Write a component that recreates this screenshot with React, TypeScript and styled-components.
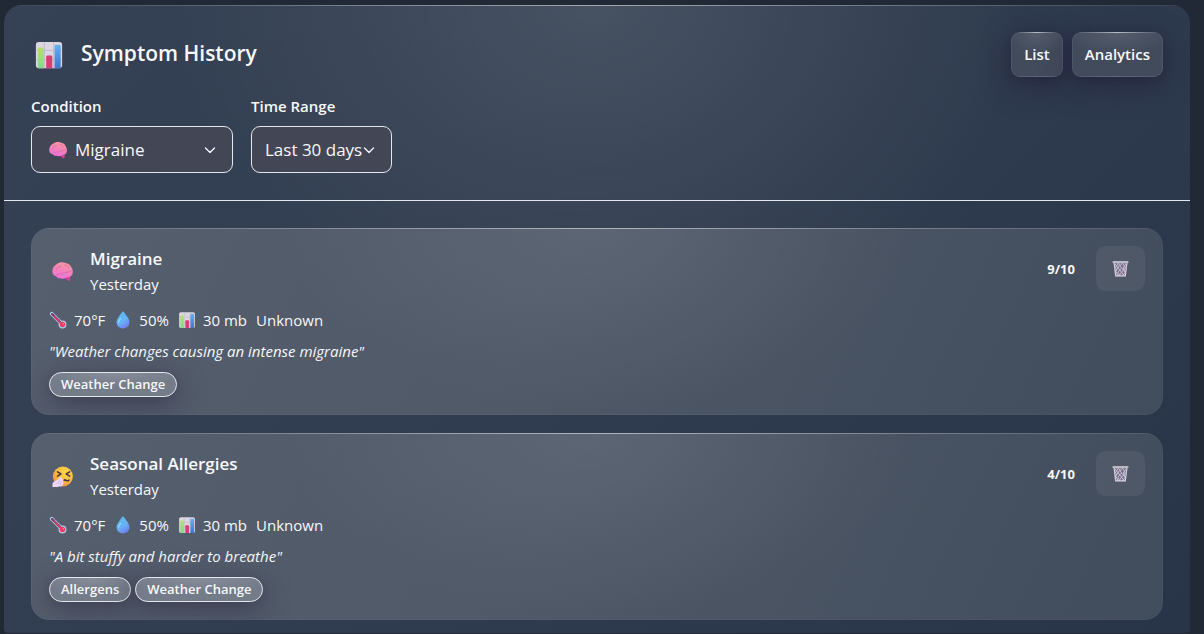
import React from "react";
import styled, { createGlobalStyle } from "styled-components";

const GlobalStyle = createGlobalStyle`
  * { box-sizing: border-box; }
  body {
    margin: 0;
    background: #222936;
    color: #f7f8fa;
    font-family: "Open Sans", "Noto Sans", sans-serif;
    font-size: 15px;
    line-height: 24px;
  }
  button, select { font-family: inherit; color: inherit; margin: 0; }
  h1, h2, p, ul { margin: 0; padding: 0; }
`;

const Page = styled.div`
  padding: 5px 14px 1px 4px;
`;

const Panel = styled.main`
  position: relative;
  border-radius: 18px 18px 4px 4px;
  overflow: hidden;
  background:
    radial-gradient(ellipse 36% 56% at 50% 0, rgba(255, 255, 255, 0.1), rgba(255, 255, 255, 0) 100%),
    linear-gradient(135deg, #354154 0%, #303c4f 50%, #283548 100%);
`;

const Shine = styled.span<{ $strength: number }>`
  position: absolute;
  top: 0;
  left: 0;
  right: 0;
  height: 1px;
  background: linear-gradient(
    90deg,
    rgba(255, 255, 255, 0.04),
    rgba(255, 255, 255, ${(p) => p.$strength}) 50%,
    rgba(255, 255, 255, 0.04)
  );
`;

const Header = styled.header`
  padding: 27px;
  border-bottom: 1px solid #e4e7ec;
`;

const TitleRow = styled.div`
  display: flex;
  align-items: center;
  justify-content: space-between;
`;

const TitleGroup = styled.div`
  display: flex;
  align-items: center;
  gap: 17px;
  padding-left: 3px;
`;

const Title = styled.h1`
  padding-bottom: 3px;
  font-size: 21px;
  line-height: 30px;
  font-weight: 600;
`;

const Actions = styled.div`
  display: flex;
  gap: 9px;
`;

const ActionButton = styled.button`
  position: relative;
  height: 45px;
  padding: 0 12px 2px;
  border: 1px solid rgba(255, 255, 255, 0.07);
  border-radius: 9px;
  overflow: visible;
  background:
    radial-gradient(ellipse 60% 50% at 50% 0, rgba(255, 255, 255, 0.1), rgba(255, 255, 255, 0)),
    #424b5c;
  box-shadow: 0 8px 32px rgba(31, 20, 48, 0.42), 0 2px 8px rgba(31, 20, 48, 0.2);
  font-size: 15px;
  font-weight: 600;
`;

const ButtonShine = styled(Shine)`
  top: -1px;
  left: 6px;
  right: 6px;
`;

const Filters = styled.div`
  display: flex;
  gap: 18px;
  margin-top: 17px;
`;

const Field = styled.div<{ $width: number }>`
  display: flex;
  flex-direction: column;
  gap: 8px;
  width: ${(p) => p.$width}px;
`;

const FieldLabel = styled.label`
  font-weight: 600;
  font-size: 15px;
  line-height: 24px;
`;

const SelectBox = styled.div`
  position: relative;
  display: flex;
  align-items: center;
`;

const Select = styled.select<{ $inset: number }>`
  appearance: none;
  width: 100%;
  height: 47px;
  padding: 0 13px 1px ${(p) => p.$inset}px;
  border: 1px solid #e4e7ec;
  border-radius: 9px;
  background: #434755;
  font-size: 17px;
`;

const SelectIcon = styled.span<{ $end?: boolean }>`
  position: absolute;
  ${(p) => (p.$end ? "right: 17px;" : "left: 17px;")}
  display: flex;
  pointer-events: none;
`;

const List = styled.ul`
  list-style: none;
  display: flex;
  flex-direction: column;
  gap: 18px;
  padding: 27px 27px 13px;
`;

const Card = styled.li`
  position: relative;
  overflow: hidden;
  padding: 18px;
  border-radius: 18px;
  box-shadow: inset 0 0 0 1px rgba(255, 255, 255, 0.03);
  background:
    radial-gradient(ellipse 28% 100% at 50% 0, rgba(255, 255, 255, 0.08), rgba(255, 255, 255, 0)),
    linear-gradient(115deg, #565f6e 0%, #4f5968 45%, #414c5c 100%);
`;

const CardTop = styled.div`
  display: flex;
  align-items: flex-start;
  justify-content: space-between;
`;

const Identity = styled.div`
  display: flex;
  align-items: center;
  gap: 16px;
  padding-left: 2px;
`;

const Condition = styled.h2`
  font-size: 17px;
  line-height: 26px;
  font-weight: 600;
`;

const Muted = styled.p`
  font-size: 15px;
  line-height: 24px;
`;

const CardSide = styled.div`
  display: flex;
  align-items: center;
  gap: 21px;
`;

const Score = styled.span`
  font-size: 13px;
  font-weight: 700;
`;

const DeleteButton = styled.button`
  display: flex;
  align-items: center;
  justify-content: center;
  width: 49px;
  height: 45px;
  padding: 0;
  border: 0;
  border-radius: 9px;
  background: rgba(255, 255, 255, 0.06);
`;

const Weather = styled.div`
  display: flex;
  gap: 9px;
  margin-top: 12px;
  line-height: 24px;
`;

const Reading = styled.span`
  display: flex;
  align-items: center;
  gap: 7px;
`;

const Note = styled.p`
  margin-top: 7px;
  font-style: italic;
  line-height: 24px;
`;

const Tags = styled.div`
  display: flex;
  gap: 4px;
  margin-top: 9px;
`;

const Tag = styled.span`
  height: 25px;
  padding: 0 11px;
  border: 1px solid #e4e7ec;
  border-radius: 13px;
  background:
    radial-gradient(ellipse 60% 60% at 50% 0, rgba(255, 255, 255, 0.14), rgba(255, 255, 255, 0)),
    #747b89;
  box-shadow: 0 8px 32px rgba(31, 20, 48, 0.4), 0 2px 8px rgba(31, 20, 48, 0.15);
  font-size: 13px;
  line-height: 23px;
  font-weight: 600;
`;

type IconProps = { size: number };

const ChartIcon = ({ size }: IconProps) => (
  <svg width={size} height={size} viewBox="0 0 32 32" aria-hidden="true">
    <defs>
      <linearGradient id="chartGreen" x1="0" y1="0" x2="0" y2="1">
        <stop offset="0" stopColor="#b8e069" />
        <stop offset="1" stopColor="#7fdc8e" />
      </linearGradient>
      <linearGradient id="chartBlue" x1="0" y1="0" x2="0" y2="1">
        <stop offset="0" stopColor="#5fb2f6" />
        <stop offset="1" stopColor="#3f76cf" />
      </linearGradient>
    </defs>
    <rect x="2" y="2" width="28" height="28" rx="3" fill="#dcd5e3" />
    <path d="M11 2v28M21 2v28M2 11h28M2 21h28" stroke="#bfb6c8" strokeWidth="1" />
    <path d="M4 9.500a1.500 1.500 0 0 1 1.500-1.500h3.500a1.500 1.500 0 0 1 1.500 1.500V30H5a1 1 0 0 1-1-1z" fill="url(#chartGreen)" />
    <path d="M13 18a1.500 1.500 0 0 1 1.500-1.500H18a1.500 1.500 0 0 1 1.500 1.500v12H13z" fill="#d73c72" />
    <path d="M22 6.500A1.500 1.500 0 0 1 23.500 5H27a1.500 1.500 0 0 1 1.500 1.500V29a1 1 0 0 1-1 1H22z" fill="url(#chartBlue)" />
  </svg>
);

const BrainIcon = ({ size }: IconProps) => (
  <svg width={size} height={size} viewBox="0 0 32 32" aria-hidden="true">
    <defs>
      <linearGradient id="brainPink" x1="0.65" y1="0" x2="0.35" y2="1">
        <stop offset="0" stopColor="#f5989f" />
        <stop offset="0.5" stopColor="#f183b8" />
        <stop offset="1" stopColor="#f070de" />
      </linearGradient>
    </defs>
    <path d="M19 23l7-1.500c1 2.500 1 5.500-.2 8.200-2.800-1-5.600-3.300-6.800-6.700z" fill="#d8409a" />
    <path
      d="M2 17C1.500 11 4.500 7.500 8 5.800c3-2.600 8-3.300 12-1.800 4 .3 7.500 3 8.500 6.500 2 3 2.500 7 1 10-1.500 2.800-4.500 3.800-7 3.300-2.500 2.500-6 2.800-9 1.500-3 .3-5-.8-6.500-2.800C4.300 21.800 2.200 19.800 2 17z"
      fill="url(#brainPink)"
    />
    <path
      d="M7 14c1-3 3-5 7-5M19 7c3 0 5 1.500 5.500 4M8 20.500c3 .5 5-1 6.500-3M15 21c1-3 5-4.500 8-3.500M23 17.500c1.500-2 3-2.500 5-2"
      fill="none"
      stroke="#d4629f"
      strokeWidth="1.200"
      strokeOpacity="0.75"
      strokeLinecap="round"
    />
  </svg>
);

const SneezeIcon = ({ size }: IconProps) => (
  <svg width={size} height={size} viewBox="0 0 32 32" aria-hidden="true">
    <defs>
      <radialGradient id="faceYellow" cx="0.65" cy="0.3" r="0.8">
        <stop offset="0" stopColor="#ffd84f" />
        <stop offset="0.6" stopColor="#f8b73f" />
        <stop offset="1" stopColor="#ec8747" />
      </radialGradient>
    </defs>
    <circle cx="16.500" cy="16" r="14" fill="url(#faceYellow)" />
    <path d="M9 9.500l5 3L9 15.500M26 9.500l-5 3 5 3" fill="none" stroke="#46303f" strokeWidth="2" strokeLinecap="round" strokeLinejoin="round" />
    <path d="M18 21.500c1.500-1.800 2.500-.5 3.500.2s2 .6 3.500-.7" fill="none" stroke="#46303f" strokeWidth="2" strokeLinecap="round" />
    <path d="M14 16c.5 2 1.500 4 3.500 5.500-1 1-1 2 0 3.200l-1.500 4.300c-1.500 1.600-4 .8-6 1.400-2.500.6-5 0-7.200.4-1.600-1.300-.3-3-.8-4.500-.2-1.800 2.300-2.700 3.300-4C8 21 11.500 19 14 16z" fill="#f0d6f6" />
    <path d="M13 20l-4 7M14.500 23l-1.500 5" stroke="#cfa8df" strokeWidth="1" />
  </svg>
);

const ThermometerIcon = ({ size }: IconProps) => (
  <svg width={size} height={size} viewBox="0 0 32 32" aria-hidden="true">
    <path d="M5 5l18 18" stroke="#a9cdea" strokeWidth="7" strokeLinecap="round" />
    <circle cx="24" cy="24" r="7" fill="#a9cdea" />
    <path d="M5.500 5.500L24 24" stroke="#7c3763" strokeWidth="4" strokeLinecap="round" />
    <path d="M9 9l15 15" stroke="#e73565" strokeWidth="3" strokeLinecap="round" />
    <circle cx="24" cy="24" r="4.800" fill="#ee3c60" />
    <circle cx="25.500" cy="22.500" r="1.300" fill="#ff98a7" />
    <path d="M11 6l-2.500 2.500M15 10l-2.500 2.500M19 14l-2.500 2.500" stroke="#496382" strokeWidth="1.400" />
  </svg>
);

const DropIcon = ({ size }: IconProps) => (
  <svg width={size} height={size} viewBox="0 0 32 32" aria-hidden="true">
    <defs>
      <linearGradient id="dropBlue" x1="0.2" y1="0" x2="0.7" y2="1">
        <stop offset="0" stopColor="#5db6e8" />
        <stop offset="0.55" stopColor="#65b4f6" />
        <stop offset="1" stopColor="#727bf0" />
      </linearGradient>
    </defs>
    <path d="M14.600 1.500c.7-1 2-1 2.700 0C21.500 8 27.500 14 27.500 20A11.500 11 0 0 1 4.500 20C4.500 14 11 7.500 14.600 1.500z" fill="url(#dropBlue)" />
    <path d="M8 20c0-3 2-5 4-7" stroke="#9bd9fb" strokeWidth="2" fill="none" strokeLinecap="round" />
  </svg>
);

const BinIcon = ({ size }: IconProps) => (
  <svg width={size} height={size} viewBox="0 0 32 32" aria-hidden="true">
    <path d="M3 5h26l-3 26H6z" fill="#77708a" />
    <path
      d="M5 7l6 7-4 7 5 9M12 6l6 9-7 8 4 7M20 6l5 9-7 8 5 7M27 7l-6 8 4 8-5 7M20 6l-9 8M12 6l-6 9M11 14l7 9-5 7M18 15l7 8M7 21l4-7"
      stroke="#cdc5d8"
      strokeWidth="1.700"
      fill="none"
    />
    <path d="M4 6l3 24M28 6l-3 24M6 30h20" stroke="#d6cfdf" strokeWidth="2.200" fill="none" />
    <rect x="1" y="2" width="30" height="4" rx="1.500" fill="#bfb9c6" />
  </svg>
);

const ChevronIcon = () => (
  <svg width="12" height="12" viewBox="0 0 12 12" aria-hidden="true">
    <path d="M1.500 4L6 8.500 10.500 4" fill="none" stroke="#f3f4f7" strokeWidth="1.400" strokeLinecap="round" strokeLinejoin="round" />
  </svg>
);

type Entry = {
  id: string;
  name: string;
  icon: React.ReactNode;
  score: number;
  note: string;
  triggers: string[];
};

const entries: Entry[] = [
  {
    id: "migraine",
    name: "Migraine",
    icon: <BrainIcon size={23} />,
    score: 9,
    note: "Weather changes causing an intense migraine",
    triggers: ["Weather Change"],
  },
  {
    id: "allergies",
    name: "Seasonal Allergies",
    icon: <SneezeIcon size={23} />,
    score: 4,
    note: "A bit stuffy and harder to breathe",
    triggers: ["Allergens", "Weather Change"],
  },
];

const EntryCard = ({ entry }: { entry: Entry }) => (
  <Card>
    <Shine $strength={0.5} />
    <CardTop>
      <Identity>
        {entry.icon}
        <div>
          <Condition>{entry.name}</Condition>
          <Muted>Yesterday</Muted>
        </div>
      </Identity>
      <CardSide>
        <Score>{entry.score}/10</Score>
        <DeleteButton type="button" aria-label={`Delete ${entry.name}`}>
          <BinIcon size={17} />
        </DeleteButton>
      </CardSide>
    </CardTop>
    <Weather>
      <Reading><ThermometerIcon size={18} />70°F</Reading>
      <Reading><DropIcon size={18} />50%</Reading>
      <Reading><ChartIcon size={18} />30 mb</Reading>
      <Reading>Unknown</Reading>
    </Weather>
    <Note>"{entry.note}"</Note>
    <Tags>
      {entry.triggers.map((t) => (
        <Tag key={t}>{t}</Tag>
      ))}
    </Tags>
  </Card>
);

export default function App() {
  return (
    <Page>
      <GlobalStyle />
      <Panel>
        <Shine $strength={0.5} />
        <Header>
          <TitleRow>
            <TitleGroup>
              <ChartIcon size={30} />
              <Title>Symptom History</Title>
            </TitleGroup>
            <Actions>
              <ActionButton type="button"><ButtonShine $strength={0.6} />List</ActionButton>
              <ActionButton type="button"><ButtonShine $strength={0.6} />Analytics</ActionButton>
            </Actions>
          </TitleRow>
          <Filters>
            <Field $width={202}>
              <FieldLabel htmlFor="condition">Condition</FieldLabel>
              <SelectBox>
                <Select id="condition" $inset={43} defaultValue="migraine">
                  <option value="migraine">Migraine</option>
                  <option value="allergies">Seasonal Allergies</option>
                </Select>
                <SelectIcon><BrainIcon size={20} /></SelectIcon>
                <SelectIcon $end><ChevronIcon /></SelectIcon>
              </SelectBox>
            </Field>
            <Field $width={141}>
              <FieldLabel htmlFor="range">Time Range</FieldLabel>
              <SelectBox>
                <Select id="range" $inset={13} defaultValue="30">
                  <option value="7">Last 7 days</option>
                  <option value="30">Last 30 days</option>
                  <option value="90">Last 90 days</option>
                </Select>
                <SelectIcon $end><ChevronIcon /></SelectIcon>
              </SelectBox>
            </Field>
          </Filters>
        </Header>
        <List>
          {entries.map((e) => (
            <EntryCard key={e.id} entry={e} />
          ))}
        </List>
      </Panel>
    </Page>
  );
}
